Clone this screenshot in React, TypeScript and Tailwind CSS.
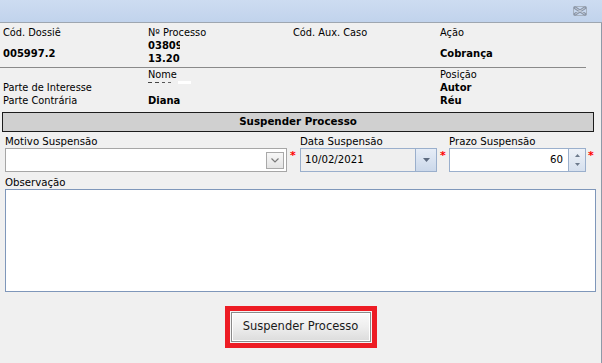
import React from "react";

const reg = "font-['DejaVu_Sans',sans-serif]";
const bold = "font-['DejaVu_Sans',sans-serif] font-bold";

function CloseIcon() {
  return (
    <svg width="14" height="10" viewBox="0 0 14 10">
      <rect x="0.5" y="0.5" width="13" height="9" rx="1" fill="none" stroke="#a7b1be" strokeWidth="1" />
      <path d="M2 1.8 L12 8.2 M12 1.8 L2 8.2" stroke="#8a96a8" strokeWidth="3" strokeLinecap="round" />
      <path d="M2.5 2.1 L11.5 7.9 M11.5 2.1 L2.5 7.9" stroke="#d3dae4" strokeWidth="0.8" strokeLinecap="round" />
    </svg>
  );
}

function Asterisk() {
  return (
    <span className="text-[#ff0000] font-['DejaVu_Sans',sans-serif] text-[11px] font-bold leading-none mt-[2px]">*</span>
  );
}

export default function App() {
  return (
    <div className={`w-[602px] h-[363px] bg-[#f0f0f0] overflow-hidden flex flex-col text-black ${reg}`}>
      {/* title bar */}
      <div className="h-[23px] shrink-0 bg-gradient-to-b from-[#cddcf1] to-[#c1d3ec] border-b border-[#9ea6b0] flex items-center justify-end pr-[15px]">
        <CloseIcon />
      </div>

      <div className="flex-1 border-r border-[#8e99a8] w-[602px] flex flex-col">
        {/* info top */}
        <div className="pt-[3px] pl-[3px] text-[9.8px]">
          <div className="grid grid-cols-[145px_145px_147px_1fr] h-[13px] leading-[13px]">
            <div>Cód. Dossiê</div>
            <div>Nº Processo</div>
            <div>Cód. Aux. Caso</div>
            <div>Ação</div>
          </div>
          <div className="grid grid-cols-[145px_145px_147px_1fr] h-[28px]">
            <div className={`${bold} text-[10px] flex items-center`}>005997.2</div>
            <div className={`${bold} text-[10px] w-[32px] overflow-hidden leading-[13px] whitespace-nowrap`}>
              <div>03809972</div>
              <div>13.2021</div>
            </div>
            <div></div>
            <div className={`${bold} text-[10px] flex items-center`}>Cobrança</div>
          </div>
        </div>
        <div className="h-px w-[586px] bg-[#8a8a8a]"></div>
        <div className="pl-[3px] text-[9.8px] grid grid-cols-[145px_145px_147px_1fr] grid-rows-[13px_13px_13px] leading-[13px]">
          <div></div>
          <div>Nome</div>
          <div></div>
          <div>Posição</div>

          <div>Parte de Interesse</div>
          <div className="h-[13px]">
            <div className="flex items-start pt-[1px] gap-[3px]">
              <span className="block w-[4px] h-px bg-[#444]"></span>
              <span className="block w-[4px] h-px bg-[#444]"></span>
              <span className="block w-[3px] h-px bg-[#555]"></span>
              <span className="block w-[3px] h-px bg-[#666]"></span>
              <span className="block w-[13px] h-[3px] bg-white -mt-[1px] ml-[4px]"></span>
            </div>
          </div>
          <div></div>
          <div className={`${bold} text-[10px]`}>Autor</div>

          <div>Parte Contrária</div>
          <div className={`${bold} text-[10px]`}>Diana</div>
          <div></div>
          <div className={`${bold} text-[10px]`}>Réu</div>
        </div>

        {/* section header */}
        <div className="mt-[5px] ml-[2px] w-[592px] h-[20px] bg-[#d0d0d0] border border-[#1c1c1c] flex items-center justify-center">
          <span className={`${bold} text-[10.3px]`}>Suspender Processo</span>
        </div>

        {/* form row */}
        <div className="mt-[3px] flex text-[10.2px]">
          <div className="pl-[5px] w-[300px] flex flex-col">
            <div className="leading-[13px] h-[13px]">Motivo Suspensão</div>
            <div className="flex items-start gap-[3px]">
              <div className="w-[282px] h-[24px] bg-white border border-[#a6a6a6] flex items-center justify-end pr-[2px]">
                <div className="w-[18px] h-[17px] border border-[#a9a9a9] bg-gradient-to-b from-[#f7f7f7] to-[#e4e4e4] flex items-center justify-center">
                  <svg width="8" height="5" viewBox="0 0 8 5">
                    <path d="M0.5 0.5 L4 4 L7.5 0.5" stroke="#7a7a7a" strokeWidth="1.2" fill="none" />
                  </svg>
                </div>
              </div>
              <Asterisk />
            </div>
          </div>
          <div className="w-[149px] flex flex-col">
            <div className="leading-[13px] h-[13px]">Data Suspensão</div>
            <div className="flex items-start gap-[3px]">
              <div className="w-[137px] h-[24px] flex">
                <div className="flex-1 bg-[#efefef] border border-[#9aafcc] border-r-0 flex items-center pl-[4px] text-[10.2px]">10/02/2021</div>
                <div className="w-[22px] border border-[#9aafcc] bg-gradient-to-b from-[#e6edf7] to-[#cbd8ea] flex items-center justify-center">
                  <svg width="7" height="4" viewBox="0 0 7 4">
                    <path d="M0 0 L7 0 L3.5 4 Z" fill="#5d6b80" />
                  </svg>
                </div>
              </div>
              <Asterisk />
            </div>
          </div>
          <div className="flex flex-col">
            <div className="leading-[13px] h-[13px]">Prazo Suspensão</div>
            <div className="flex items-start gap-[2px]">
              <div className="w-[137px] h-[24px] flex">
                <div className="flex-1 bg-white border border-[#9aafcc] border-r-0 flex items-center justify-end pr-[5px] text-[10.2px]">60</div>
                <div className="w-[18px] border border-[#9aafcc] bg-gradient-to-b from-[#eef2f8] to-[#d6e0ee] flex flex-col items-center justify-center gap-[6px]">
                  <svg width="5" height="3" viewBox="0 0 5 3">
                    <path d="M0 3 L5 3 L2.5 0 Z" fill="#6d7a8c" />
                  </svg>
                  <svg width="5" height="3" viewBox="0 0 5 3">
                    <path d="M0 0 L5 0 L2.5 3 Z" fill="#6d7a8c" />
                  </svg>
                </div>
              </div>
              <Asterisk />
            </div>
          </div>
        </div>

        {/* observacao */}
        <div className="mt-[5px] pl-[5px] text-[10.2px] leading-[12px] h-[12px]">Observação</div>
        <div className="ml-[5px] w-[591px] h-[103px] bg-white border border-[#7f97ba]"></div>

        {/* button */}
        <div className="mt-[14px] w-[601px] flex justify-center">
          <div className="w-[152px] h-[42px] border-[5px] border-[#ed1c24] p-[1px] bg-[#f4f4f4] flex">
            <div className="flex-1 border border-[#8a8a8a] bg-gradient-to-b from-[#fafafa] via-[#eeeeee] to-[#dcdcdc] flex items-center justify-center shadow-[inset_0_0_0_1px_#ffffff]">
              <span className="text-[11.5px] text-[#1a1a1a]">Suspender Processo</span>
            </div>
          </div>
        </div>
      </div>
    </div>
  );
}
